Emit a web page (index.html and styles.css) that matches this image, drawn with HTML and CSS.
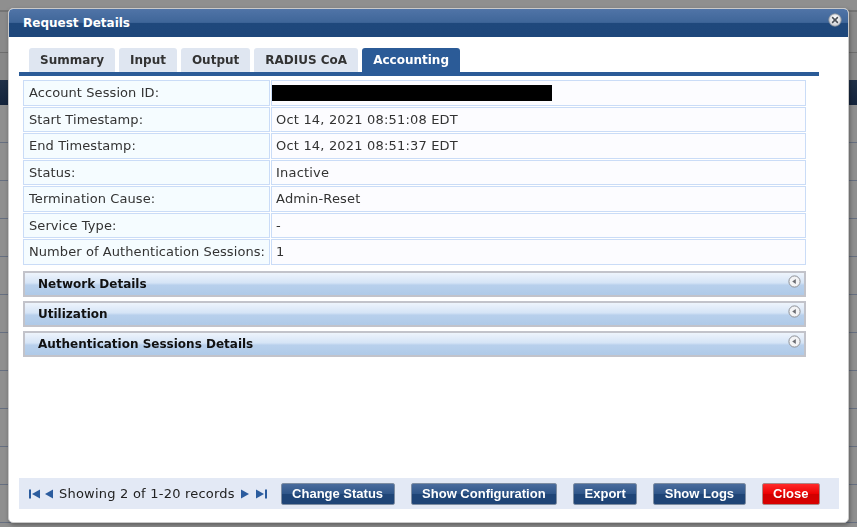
FILE: index.html
```html
<!DOCTYPE html>
<html lang="en">
<head>
  <meta charset="UTF-8" />
  <meta name="viewport" content="width=device-width, initial-scale=1.0" />
  <title>Request Details</title>
  <link rel="stylesheet" href="styles.css">
</head>
<body>
  <!-- page behind the dialog -->
  <div class="page">
    <div class="page-top"></div>
    <div class="page-nav"></div>
    <div class="page-sub"></div>
    <div class="page-head"></div>
    <div class="page-row"></div>
    <div class="page-row"></div>
    <div class="page-row"></div>
    <div class="page-row"></div>
    <div class="page-row"></div>
    <div class="page-row"></div>
    <div class="page-row"></div>
    <div class="page-row"></div>
    <div class="page-row"></div>
    <div class="page-row"></div>
    <div class="page-row"><span class="page-cell">Wireless</span></div>
  </div>
  <div class="overlay"></div>

  <div class="dialog">
    <div class="dialog-title">
      <span>Request Details</span>
      <svg class="dialog-close" width="14" height="14" viewBox="0 0 14 14">
        <defs>
          <radialGradient id="cg" cx="50%" cy="35%" r="65%">
            <stop offset="0" stop-color="#ffffff"/>
            <stop offset="1" stop-color="#c9ccd2"/>
          </radialGradient>
        </defs>
        <circle cx="7" cy="7" r="6.2" fill="url(#cg)" stroke="#8a9099" stroke-width="0.8"/>
        <path d="M4.6 4.6 L9.4 9.4 M9.4 4.6 L4.6 9.4" stroke="#4a4f57" stroke-width="1.5" stroke-linecap="round"/>
      </svg>
    </div>

    <div class="dialog-body">
      <div class="tabs">
        <div class="tab">Summary</div>
        <div class="tab">Input</div>
        <div class="tab">Output</div>
        <div class="tab">RADIUS CoA</div>
        <div class="tab active">Accounting</div>
      </div>

      <table class="details">
        <tr><td class="label">Account Session ID:</td><td class="value"><span class="redacted"></span></td></tr>
        <tr><td class="label">Start Timestamp:</td><td class="value">Oct 14, 2021 08:51:08 EDT</td></tr>
        <tr><td class="label">End Timestamp:</td><td class="value">Oct 14, 2021 08:51:37 EDT</td></tr>
        <tr><td class="label">Status:</td><td class="value">Inactive</td></tr>
        <tr><td class="label">Termination Cause:</td><td class="value">Admin-Reset</td></tr>
        <tr><td class="label">Service Type:</td><td class="value">-</td></tr>
        <tr><td class="label">Number of Authentication Sessions:</td><td class="value">1</td></tr>
      </table>

      <div class="section first">
        <span>Network Details</span>
        <svg class="section-icon" width="13" height="13" viewBox="0 0 13 13">
          <circle cx="6.5" cy="6.5" r="5.6" fill="#f2f3f5" stroke="#8d8f94" stroke-width="1"/>
          <path d="M4.2 6.5 L7.8 4.1 L7.8 8.9 Z" fill="#6b6d72"/>
        </svg>
      </div>
      <div class="section">
        <span>Utilization</span>
        <svg class="section-icon" width="13" height="13" viewBox="0 0 13 13">
          <circle cx="6.5" cy="6.5" r="5.6" fill="#f2f3f5" stroke="#8d8f94" stroke-width="1"/>
          <path d="M4.2 6.5 L7.8 4.1 L7.8 8.9 Z" fill="#6b6d72"/>
        </svg>
      </div>
      <div class="section">
        <span>Authentication Sessions Details</span>
        <svg class="section-icon" width="13" height="13" viewBox="0 0 13 13">
          <circle cx="6.5" cy="6.5" r="5.6" fill="#f2f3f5" stroke="#8d8f94" stroke-width="1"/>
          <path d="M4.2 6.5 L7.8 4.1 L7.8 8.9 Z" fill="#6b6d72"/>
        </svg>
      </div>
    </div>

    <div class="dialog-footer">
      <div class="pager">
        <svg width="12" height="10" viewBox="0 0 12 10"><rect x="0" y="0.5" width="2" height="9" fill="#2b5c9e"/><path d="M3 5 L11 0.5 L11 9.5 Z" fill="#2b5c9e"/></svg>
        <svg class="pager-prev" width="9" height="10" viewBox="0 0 9 10"><path d="M0 5 L8 0.5 L8 9.5 Z" fill="#2b5c9e"/></svg>
        <span class="pager-text">Showing 2 of 1-20 records</span>
        <svg width="9" height="10" viewBox="0 0 9 10"><path d="M9 5 L1 0.5 L1 9.5 Z" fill="#2b5c9e"/></svg>
        <svg class="pager-last" width="12" height="10" viewBox="0 0 12 10"><path d="M8 5 L0 0.5 L0 9.5 Z" fill="#2b5c9e"/><rect x="9" y="0.5" width="2" height="9" fill="#2b5c9e"/></svg>
      </div>
      <div class="actions">
        <button class="btn">Change Status</button>
        <button class="btn">Show Configuration</button>
        <button class="btn">Export</button>
        <button class="btn">Show Logs</button>
        <button class="btn btn-close">Close</button>
      </div>
    </div>
  </div>
</body>
</html>
```

FILE: styles.css
```css
body {
  margin: 0;
  font-family: "DejaVu Sans", Verdana, sans-serif;
  font-size: 13px;
  color: #333;
  background: #fff;
  overflow: hidden;
}

/* background page */
.page {
  width: 857px;
  height: 527px;
  overflow: hidden;
}
.page-top {
  height: 10px;
  background: #fff;
  border-bottom: 2px solid #cfcfcf;
}
.page-nav {
  height: 40px;
  background: #f6f6f6;
  border-bottom: 1px solid #c4c4c4;
}
.page-sub {
  height: 27px;
  background: #f2f2f2;
}
.page-head {
  height: 25px;
  background: linear-gradient(#3a5680, #24406a);
}
.page-row {
  height: 37px;
  border-bottom: 1px solid #b7c7e6;
  background: #fff;
}
.page-cell {
  display: block;
  padding: 25px 0 0 643px;
  font-size: 12.5px;
  color: #555;
}
.overlay {
  position: fixed;
  inset: 0;
  background: rgba(0, 0, 0, 0.44);
}

/* dialog */
.dialog {
  position: absolute;
  left: 8px;
  top: 8px;
  width: 839px;
  height: 513px;
  background: #fff;
  border: 1px solid #c9c9c9;
  border-radius: 5px;
  box-shadow: 1px 2px 4px rgba(0, 0, 0, 0.35);
  display: flex;
  flex-direction: column;
  overflow: hidden;
}
.dialog-title {
  height: 28px;
  padding: 0 0 0 14px;
  display: flex;
  align-items: center;
  justify-content: space-between;
  color: #fff;
  font-weight: bold;
  font-size: 12px;
  background: linear-gradient(#5074a7 0%, #3f6699 48%, #1f487c 50%, #1e477b 100%);
  border-radius: 4px 4px 0 0;
}
.dialog-close {
  margin: -6px 6px 0 0;
}
.dialog-body {
  padding: 11px 10px 0;
  width: 800px;
}

/* tabs */
.tabs {
  display: flex;
  gap: 4px;
  padding-left: 10px;
  border-bottom: 4px solid #2b5b97;
}
.tab {
  height: 24px;
  line-height: 25px;
  padding: 0 11px;
  font-size: 12px;
  font-weight: bold;
  color: #333;
  background: #dfe6f1;
  border-radius: 3px 3px 0 0;
}
.tab.active {
  background: #2b5b97;
  color: #fff;
}

/* details table */
.details {
  margin: 3px 0 0 3px;
  width: 785px;
  border-collapse: separate;
  border-spacing: 1px;
}
.details td {
  border: 1px solid #cadcf7;
  padding: 4px 4px 3.5px;
  line-height: 16px;
  white-space: nowrap;
}
.details .label {
  width: 236px;
  padding-left: 5px;
  letter-spacing: 0.08px;
  background: #f5fcff;
}
.details .value {
  letter-spacing: 0.18px;
  background: #fcfcff;
}
.redacted {
  display: block;
  width: 280px;
  height: 16px;
  margin-left: -4px;
  background: #000;
}

/* collapsible sections */
.section {
  box-sizing: border-box;
  margin: 4px 0 0 4px;
  width: 783px;
  height: 26px;
  padding: 0 0 0 13px;
  border: 2px solid #c2c3ca;
  display: flex;
  align-items: center;
  justify-content: space-between;
  font-size: 12px;
  font-weight: bold;
  color: #111;
  background: linear-gradient(#eef4fc 0%, #d5e4f6 45%, #b8d0ec 55%, #afcae8 100%);
}
.section.first {
  margin-top: 5px;
}
.section-icon {
  margin: -4px 3px 0 0;
}

/* footer */
.dialog-footer {
  margin: auto 9px 13px 10px;
  height: 31px;
  background: #e3e9f5;
  display: flex;
  align-items: center;
  justify-content: space-between;
  padding: 0 19px 0 10px;
}
.pager {
  display: flex;
  align-items: center;
  gap: 5px;
}
.pager-prev {
  margin-left: -1px;
}
.pager-text {
  letter-spacing: 0.22px;
  color: #222;
}
.pager-last {
  margin-left: 2px;
}
.actions {
  display: flex;
  gap: 16px;
}
.btn {
  height: 22px;
  padding: 0 10.5px;
  font-family: "Liberation Sans", Arial, sans-serif;
  font-size: 13px;
  font-weight: bold;
  color: #fff;
  border: 1px solid #7e8ea3;
  border-radius: 2px;
  background: linear-gradient(#4a6c9d 0%, #2f5689 50%, #1f4577 52%, #1f4577 100%);
  cursor: pointer;
}
.btn-close {
  border-color: #a88;
  background: linear-gradient(#ff2a2a 0%, #ec0000 50%, #d10000 52%, #d80000 100%);
}
```
